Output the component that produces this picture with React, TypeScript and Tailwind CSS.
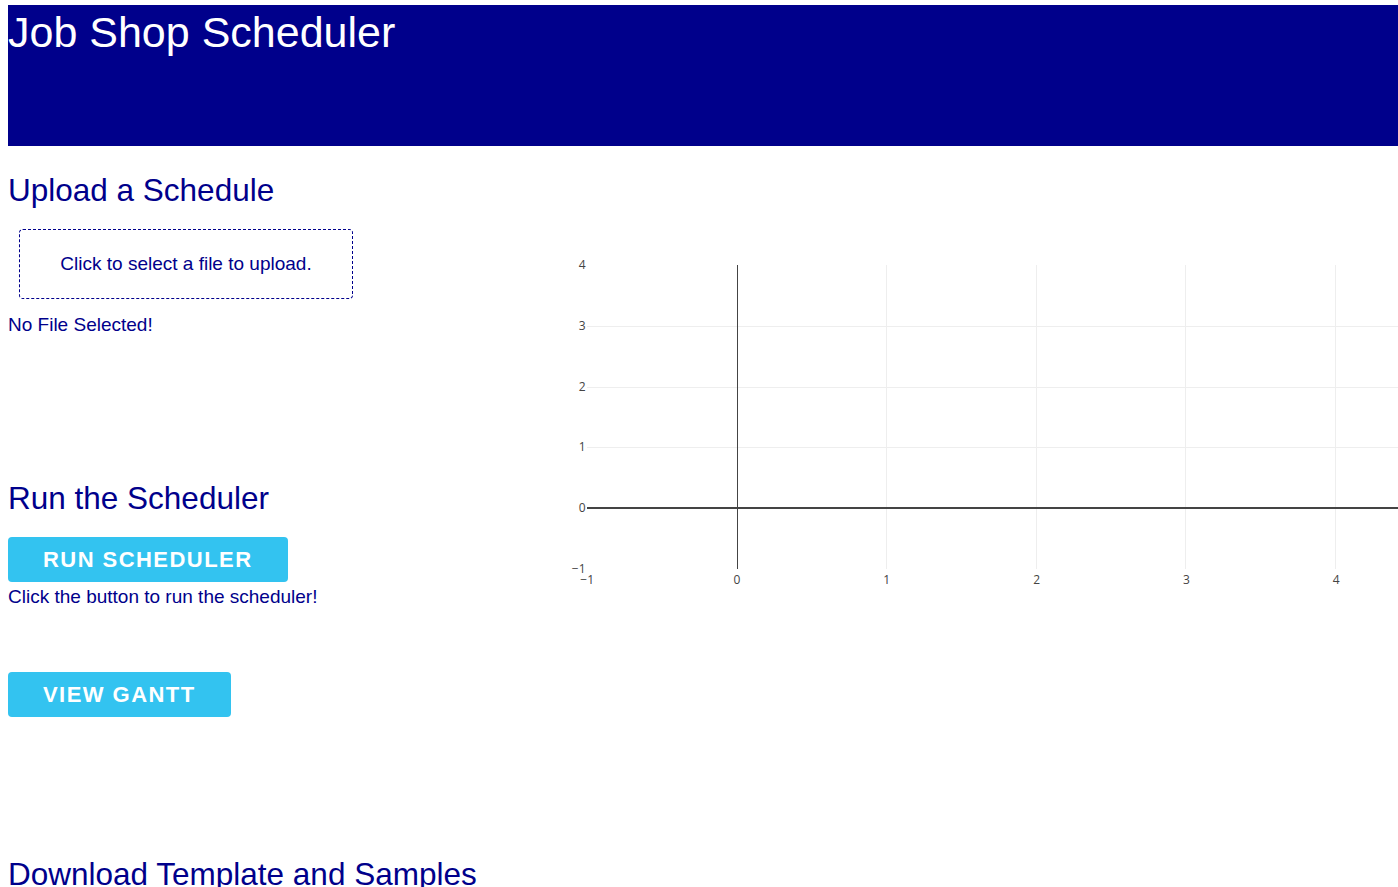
import React from "react";

const font = { fontFamily: '"Liberation Sans", Arial, sans-serif' };

// plot geometry (svg coords, origin at page x=560, y=146)
const xPos = (v: number) => 177 + 149.8 * v;
const yPos = (v: number) => 362.2 - 60.8 * v;

const EmptyPlot = () => {
  const xTicks = [-1, 0, 1, 2, 3, 4];
  const yTicks = [-1, 0, 1, 2, 3, 4];
  const label = (v: number) => (v < 0 ? `\u2212${Math.abs(v)}` : `${v}`);
  return (
    <svg width="838" height="460" className="block">
      <g stroke="#eeeeee" strokeWidth="1">
        {[1, 2, 3].map((v) => (
          <line key={`h${v}`} x1="27" x2="838" y1={Math.round(yPos(v)) + 0.5} y2={Math.round(yPos(v)) + 0.5} />
        ))}
        {[1, 2, 3, 4].map((v) => (
          <line key={`v${v}`} x1={Math.round(xPos(v)) - 0.5} x2={Math.round(xPos(v)) - 0.5} y1="119" y2="423" />
        ))}
      </g>
      {/* zero lines */}
      <line x1="177.5" x2="177.5" y1="119" y2="423" stroke="#444" strokeWidth="1" />
      <line x1="27" x2="838" y1="362" y2="362" stroke="#444" strokeWidth="2" />
      <g fill="#444" fontSize="12" style={{ fontFamily: '"Open Sans", Verdana, Arial, sans-serif' }}>
        {yTicks.map((v) => (
          <text key={`yl${v}`} x="25.5" y={yPos(v) + 4} textAnchor="end">
            {label(v)}
          </text>
        ))}
        {xTicks.map((v) => (
          <text key={`xl${v}`} x={xPos(v)} y="438" textAnchor="middle">
            {label(v)}
          </text>
        ))}
      </g>
    </svg>
  );
};

const ActionButton = ({ children }: { children: React.ReactNode }) => (
  <button className="h-[45px] px-[35px] rounded-[4px] bg-[#33C3F0] text-white font-bold text-[22px] leading-[43px] tracking-[1.45px] uppercase self-start">
    {children}
  </button>
);

export default function App() {
  return (
    <div className="pt-[5px] pl-[8px] bg-white min-h-screen overflow-hidden" style={font}>
      {/* HEADER */}
      <div className="h-[141px] bg-[#00008B] pt-[3px]">
        <h1 className="text-white text-[43px] leading-[49px] m-0">Job Shop Scheduler</h1>
      </div>
      <div className="flex">
        {/* LEFT */}
        <div className="w-[552px] flex flex-col text-[#00008B]">
          <h2 className="mt-[26px] text-[31.5px] leading-[36px]">Upload a Schedule</h2>
          <div className="mt-[21px] ml-[11px] w-[334px] h-[70px] border border-dashed border-[#00008B] rounded-[4px] flex items-center justify-center text-[19px] cursor-pointer">
            Click to select a file to upload.
          </div>
          <p className="mt-[15px] text-[19px] leading-[22px]">No File Selected!</p>

          <h2 className="mt-[144px] text-[31.5px] leading-[36px]">Run the Scheduler</h2>
          <div className="mt-[21px] flex flex-col">
            <ActionButton>Run Scheduler</ActionButton>
          </div>
          <p className="mt-[4px] text-[19px] leading-[22px]">Click the button to run the scheduler!</p>

          <div className="mt-[64px] flex flex-col">
            <ActionButton>View Gantt</ActionButton>
          </div>

          <h2 className="mt-[139px] text-[31.5px] leading-[36px] whitespace-nowrap">Download Template and Samples</h2>
        </div>
        {/* CHART */}
        <div className="flex-1">
          <EmptyPlot />
        </div>
      </div>
    </div>
  );
}
